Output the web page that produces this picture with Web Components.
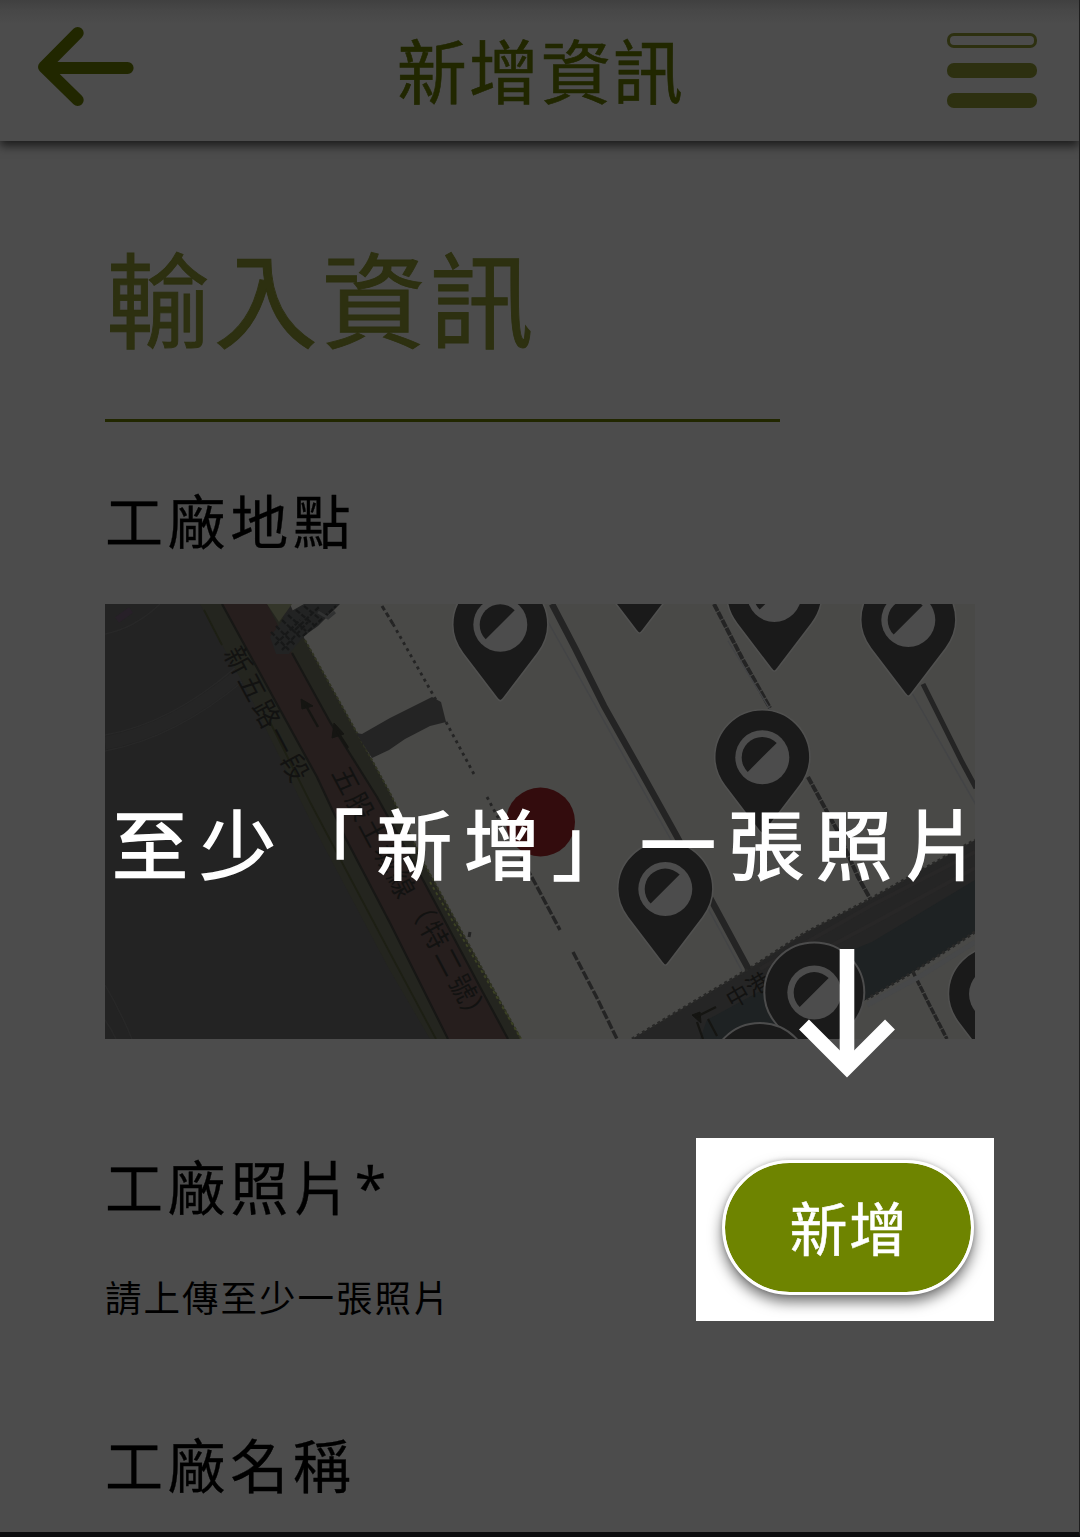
<!DOCTYPE html>
<html lang="zh-Hant">
<head>
<meta charset="utf-8">
<title>新增資訊</title>
<style>
html,body{margin:0;padding:0;background:#4c4c4c}
body{font-family:"Noto Sans CJK TC",sans-serif;color:#000}
</style>
</head>
<body>
<factory-page></factory-page>
<script>
const define=(name,html)=>{
  const t=document.createElement('template');
  t.innerHTML=html;
  customElements.define(name,class extends HTMLElement{
    constructor(){super();this.attachShadow({mode:'open'}).append(t.content.cloneNode(true));}
  });
};

define('back-arrow',`
<style>:host{display:block;width:96px;height:80px}svg{display:block}</style>
<svg width="96" height="80" viewBox="38 27 96 80" fill="none" stroke="#212700" stroke-width="12" stroke-linecap="round" stroke-linejoin="round"><path d="M77.7 33 44 67 77.7 100M46 68H127.6"/></svg>`);

define('menu-button',`
<style>
:host{display:flex;flex-direction:column;gap:15px;width:90px}
i{display:block;box-sizing:border-box;height:15px;border-radius:7px;background:#2d3010;border:3px solid #2d3010}
i:first-of-type{background:none}
</style><i></i><i></i><i></i>`);

define('app-header',`
<style>
:host{display:flex;box-sizing:border-box;height:141px;padding:27px 42.500px 0 38px;justify-content:space-between;align-items:flex-start;
 background:linear-gradient(#404040,#474747 10px,#4c4c4c 24px);box-shadow:0 5px 9px rgba(0,0,0,.62);position:relative}
h1{margin:6px 0 0 1px;font-size:70px;line-height:72px;font-weight:400;letter-spacing:2px;color:#212700;white-space:nowrap;-webkit-text-stroke:.6px #212700}
menu-button{margin-top:6px}
</style>
<back-arrow></back-arrow><h1><slot></slot></h1><menu-button></menu-button>`);

define('page-title',`
<style>
:host{display:block;box-sizing:border-box;width:675px;height:186px;padding-left:1px;border-bottom:3px solid #212700;color:#2d3010;font-size:104px;line-height:120px;letter-spacing:3.800px;white-space:nowrap;-webkit-text-stroke:.9px #2d3010}
</style><slot></slot>`);

define('field-label',`
<style>:host{display:block;font-size:58px;line-height:70px;letter-spacing:4.6px;white-space:nowrap;-webkit-text-stroke:.3px #000}</style><slot></slot>`);

define('required-mark',`
<style>:host{display:inline-block;margin-left:-1px;font-family:"Open Sans","Noto Sans",sans-serif;line-height:1}</style><slot></slot>`);

define('field-hint',`
<style>:host{display:block;font-size:36.5px;line-height:46px;letter-spacing:2px;white-space:nowrap}</style><slot></slot>`);

define('pill-button',`
<style>
:host{display:flex;align-items:center;justify-content:center;box-sizing:border-box;width:252px;height:135px;padding:0 0 3px 2px;border:3px solid #fff;border-radius:68px;
 background:#6e8400;background-clip:padding-box;color:#fff;font-size:58px;letter-spacing:1.6px;line-height:70px;-webkit-text-stroke:.5px #fff;box-shadow:0 7px 14px rgba(0,0,0,.55),0 0 4px rgba(0,0,0,.2)}
</style><span><slot></slot></span>`);

define('spotlight-box',`
<style>:host{display:flex;box-sizing:border-box;width:298px;height:183px;padding:21.500px 0 0 26px;background:#fff}</style><slot></slot>`);

define('map-view',`
<style>
:host{display:block;width:870px;height:435px;overflow:hidden}
svg{display:block}
text{font-family:"Noto Sans CJK TC",sans-serif}
</style>
<svg width="870" height="435" viewBox="105 604 870 435">
<defs>
<g id="pin">
<path d="M0 76.2C-1.5 76-2.5 74.5-4 72.5L-37.5 28.5C-44.5 19-47.6 10-47.6 0A47.6 47.6 0 0 1 47.6 0C47.6 10 44.5 19 37.5 28.5L4 72.5C2.5 74.5 1.5 76 0 76.2Z" fill="#1a1a1a" stroke="#50504f" stroke-width="1.6"/>
<circle r="27" fill="#4c4c4c"/><path d="M14.4-14.4A20.5 20.5 0 0 0-14.6 14.6Z" fill="#1a1a1a"/>
</g>
<g id="pinring">
<path d="M0 80L-40 29C-47 20-50 10-50 0A50 50 0 0 1 50 0C50 10 47 20 40 29Z" fill="#1a1a1a" stroke="#4c4c4c" stroke-width="2"/>
<circle r="27" fill="#4c4c4c"/><path d="M14.4-14.4A20.5 20.5 0 0 0-14.6 14.6Z" fill="#1a1a1a"/>
</g>
</defs>
<rect x="105" y="604" width="870" height="435" fill="#494947"/>
<path d="M105 604H290L305 640 357 733 390 793 425 865 468 943 521 1039H105Z" fill="#232323"/>
<path d="M105 735Q170 724 235 668M105 751Q175 738 243 681M105 634Q135 628 160 604M105 985Q120 1010 132 1039M105 1020Q112 1030 116 1039" stroke="#282828" stroke-width="1.4" fill="none"/>
<path d="M105 743Q172 731 239 675" stroke="#252525" stroke-width="13" fill="none"/>
<path d="M117 620 131 610" stroke="#272028" stroke-width="7"/>
<path d="M200 604H270L305 640 357 733 390 793 425 865 468 943 521 1039H430L388 967 310 820 252 700Z" fill="#24251f"/>
<path d="M222 604H267L292 653 330 722 377 797 423 880 480 987 508 1039H448L390 923 345 837 317 777Z" fill="#261e1d"/>
<path d="M222 604 317 777 345 837 390 923 448 1039M292 653 330 722 377 797 423 880 480 987 508 1039" fill="none" stroke="#171715" stroke-width="2.2"/>
<path d="M204 610 222 645M269 720 310 802 390 953 436 1039" fill="none" stroke="#1d1f14" stroke-width="1.8"/>
<path d="M305 640 357 733 390 793 425 865 468 943 521 1039" fill="none" stroke="#303322" stroke-width="2" stroke-dasharray="3 2"/>
<path d="M430 882 521 1039" fill="none" stroke="#3c4224" stroke-width="1.8" stroke-dasharray="3 3"/>
<path d="M267 604H292L279 622Z" fill="#34362a"/>
<path d="M270 637 288 613 304 604H340L318 626 304 636 289 654H276Z" fill="#222323"/>
<path d="M271 632 289 650M276 626 295 645M282 620 300 637M288 615 306 631M296 610 314 625M304 606 320 619M275 645 300 620M282 650 308 622M295 630 320 606M303 636 336 606" stroke="#171818" stroke-width="2.2" stroke-dasharray="5 2"/>
<path d="M318 612 328 618 335 612" stroke="#303131" stroke-width="3" fill="none"/>
<path d="M356 733 362 734 390 718 432 697 441 702 446 722 430 726 405 739 389 750 372 758Z" fill="#242424"/>
<g fill="none" stroke="#242424">
<path d="M382 606 393 624" stroke-width="3" stroke-dasharray="5 3"/>
<path d="M393 624 436 700M446 722 475 776M487 797 502 825" stroke-width="2.8" stroke-dasharray="3 4"/>
<path d="M521 858 535 883 560 930M573 952 597 998 617 1039" stroke-width="3.4" stroke-dasharray="9 2"/>
<path d="M552 604 575 648 604 706 640 770 675 833 749 970" stroke-width="6.5"/>
<path d="M714 604 742 658 770 708M808 777 837 830 858 877 872 902" stroke-width="4" stroke-dasharray="8 1"/>
<path d="M923 684 940 718 962 762 976 788" stroke-width="5"/>
<path d="M913 972 930 1006 947 1039" stroke-width="3.5" stroke-dasharray="7 1"/>
<path d="M470 932 469 937" stroke-width="3"/>
</g>
<path d="M547 620 670 838 742 971M728 641 774 716M912 693 980 812" fill="none" stroke="#434446" stroke-width="1.4"/>
<path d="M632 1039 680 1010 752 967 803 934 872 898 975 840V932L913 972 867 999 800 1039Z" fill="#252525"/>
<path d="M707 1020 790 975 872 942 975 880V932L913 972 867 999 800 1039H700Z" fill="#1e2223"/>
<path d="M760 969 872 905 975 852M780 973 870 925 975 868" stroke="#282727" stroke-width="4" fill="none"/>
<path d="M632 1039 680 1010 752 967 803 934 872 898 975 840M975 932 913 972 867 999" fill="none" stroke="#282827" stroke-width="3" stroke-dasharray="3 3"/>
<path d="M867 1005 917 978 975 942" stroke="#474849" stroke-width="5" fill="none"/>
<g fill="#151512" stroke="#151512">
<path d="M301 699 313 706 302 709Z"/><path d="M305 704 318 727" fill="none" stroke-width="2.4"/>
<path d="M334 723 344 734 332 738Z"/><path d="M337 731 348 748" fill="none" stroke-width="2.4"/>
<path d="M692 1015 700 1012 701 1023Z"/><path d="M696 1017 716 1007M697 1022 703 1039M708 1019 717 1036" fill="none" stroke-width="2.2"/>
</g>
<g font-size="27" fill="#121211">
<text transform="translate(223 653) rotate(62)" letter-spacing="3.400">新五路一段</text>
<text transform="translate(331 773) rotate(62)" letter-spacing="2.400">五股土城線</text>
<text transform="translate(405.600 901.500) rotate(62)" letter-spacing="3">（特二號<tspan dx="-3">）</tspan></text>
<text transform="translate(732 1009) rotate(-30)" font-size="23">中港</text>
</g>
<circle cx="540.500" cy="822" r="34.500" fill="#330c0d"/>
<use href="#pin" x="500.300" y="624.700"/>
<use href="#pin" x="639.500" y="557"/>
<use href="#pin" x="774.300" y="595"/>
<use href="#pin" x="908.300" y="620"/>
<use href="#pin" x="762.300" y="757.300"/>
<use href="#pin" x="665.300" y="889"/>
<use href="#pinring" x="814.300" y="992.500"/>
<use href="#pinring" x="760" y="1073"/>
<use href="#pin" x="996" y="994"/>
</svg>`);

define('coach-mark',`
<style>
:host{position:absolute;left:112px;top:786px;display:flex;flex-direction:column;color:#fff}
p{margin:0;font-size:76px;line-height:110px;font-weight:400;letter-spacing:12px;white-space:nowrap;-webkit-text-stroke:1.6px #fff}
svg{display:block;margin:53px 0 0 687px}
</style>
<p><slot></slot></p>
<svg width="97" height="130" viewBox="799 949 97 130" fill="none" stroke="#fff"><path d="M847 949V1066" stroke-width="14.600"/><path d="M804 1024.500 847 1067.500 890 1024.500" stroke-width="14"/></svg>`);

define('factory-page',`
<style>
:host{display:flex;flex-direction:column;box-sizing:border-box;position:relative;width:1080px;height:1537px;overflow:hidden;background:#4c4c4c;border-right:1px solid #1e1e1e;border-bottom:5px solid #0c0d0f}
main{display:flex;flex-direction:column;align-items:flex-start;padding:95px 0 0 105px}
.place{margin-top:62px}
map-view{margin-top:50px}
.photo{display:flex;align-items:flex-start;margin-top:99px;width:889px;height:183px;justify-content:space-between}
.info{display:flex;flex-direction:column;gap:54px;padding-top:12px}
.info field-label{height:70px}
.name{margin-top:107px}
</style>
<app-header>新增資訊</app-header>
<main>
<page-title>輸入資訊</page-title>
<field-label class="place">工廠地點</field-label>
<map-view></map-view>
<section class="photo">
<div class="info"><field-label>工廠照片<required-mark>*</required-mark></field-label><field-hint>請上傳至少一張照片</field-hint></div>
<spotlight-box><pill-button>新增</pill-button></spotlight-box>
</section>
<field-label class="name">工廠名稱</field-label>
</main>
<coach-mark>至少「新增」一張照片</coach-mark>`);
</script>
</body>
</html>
